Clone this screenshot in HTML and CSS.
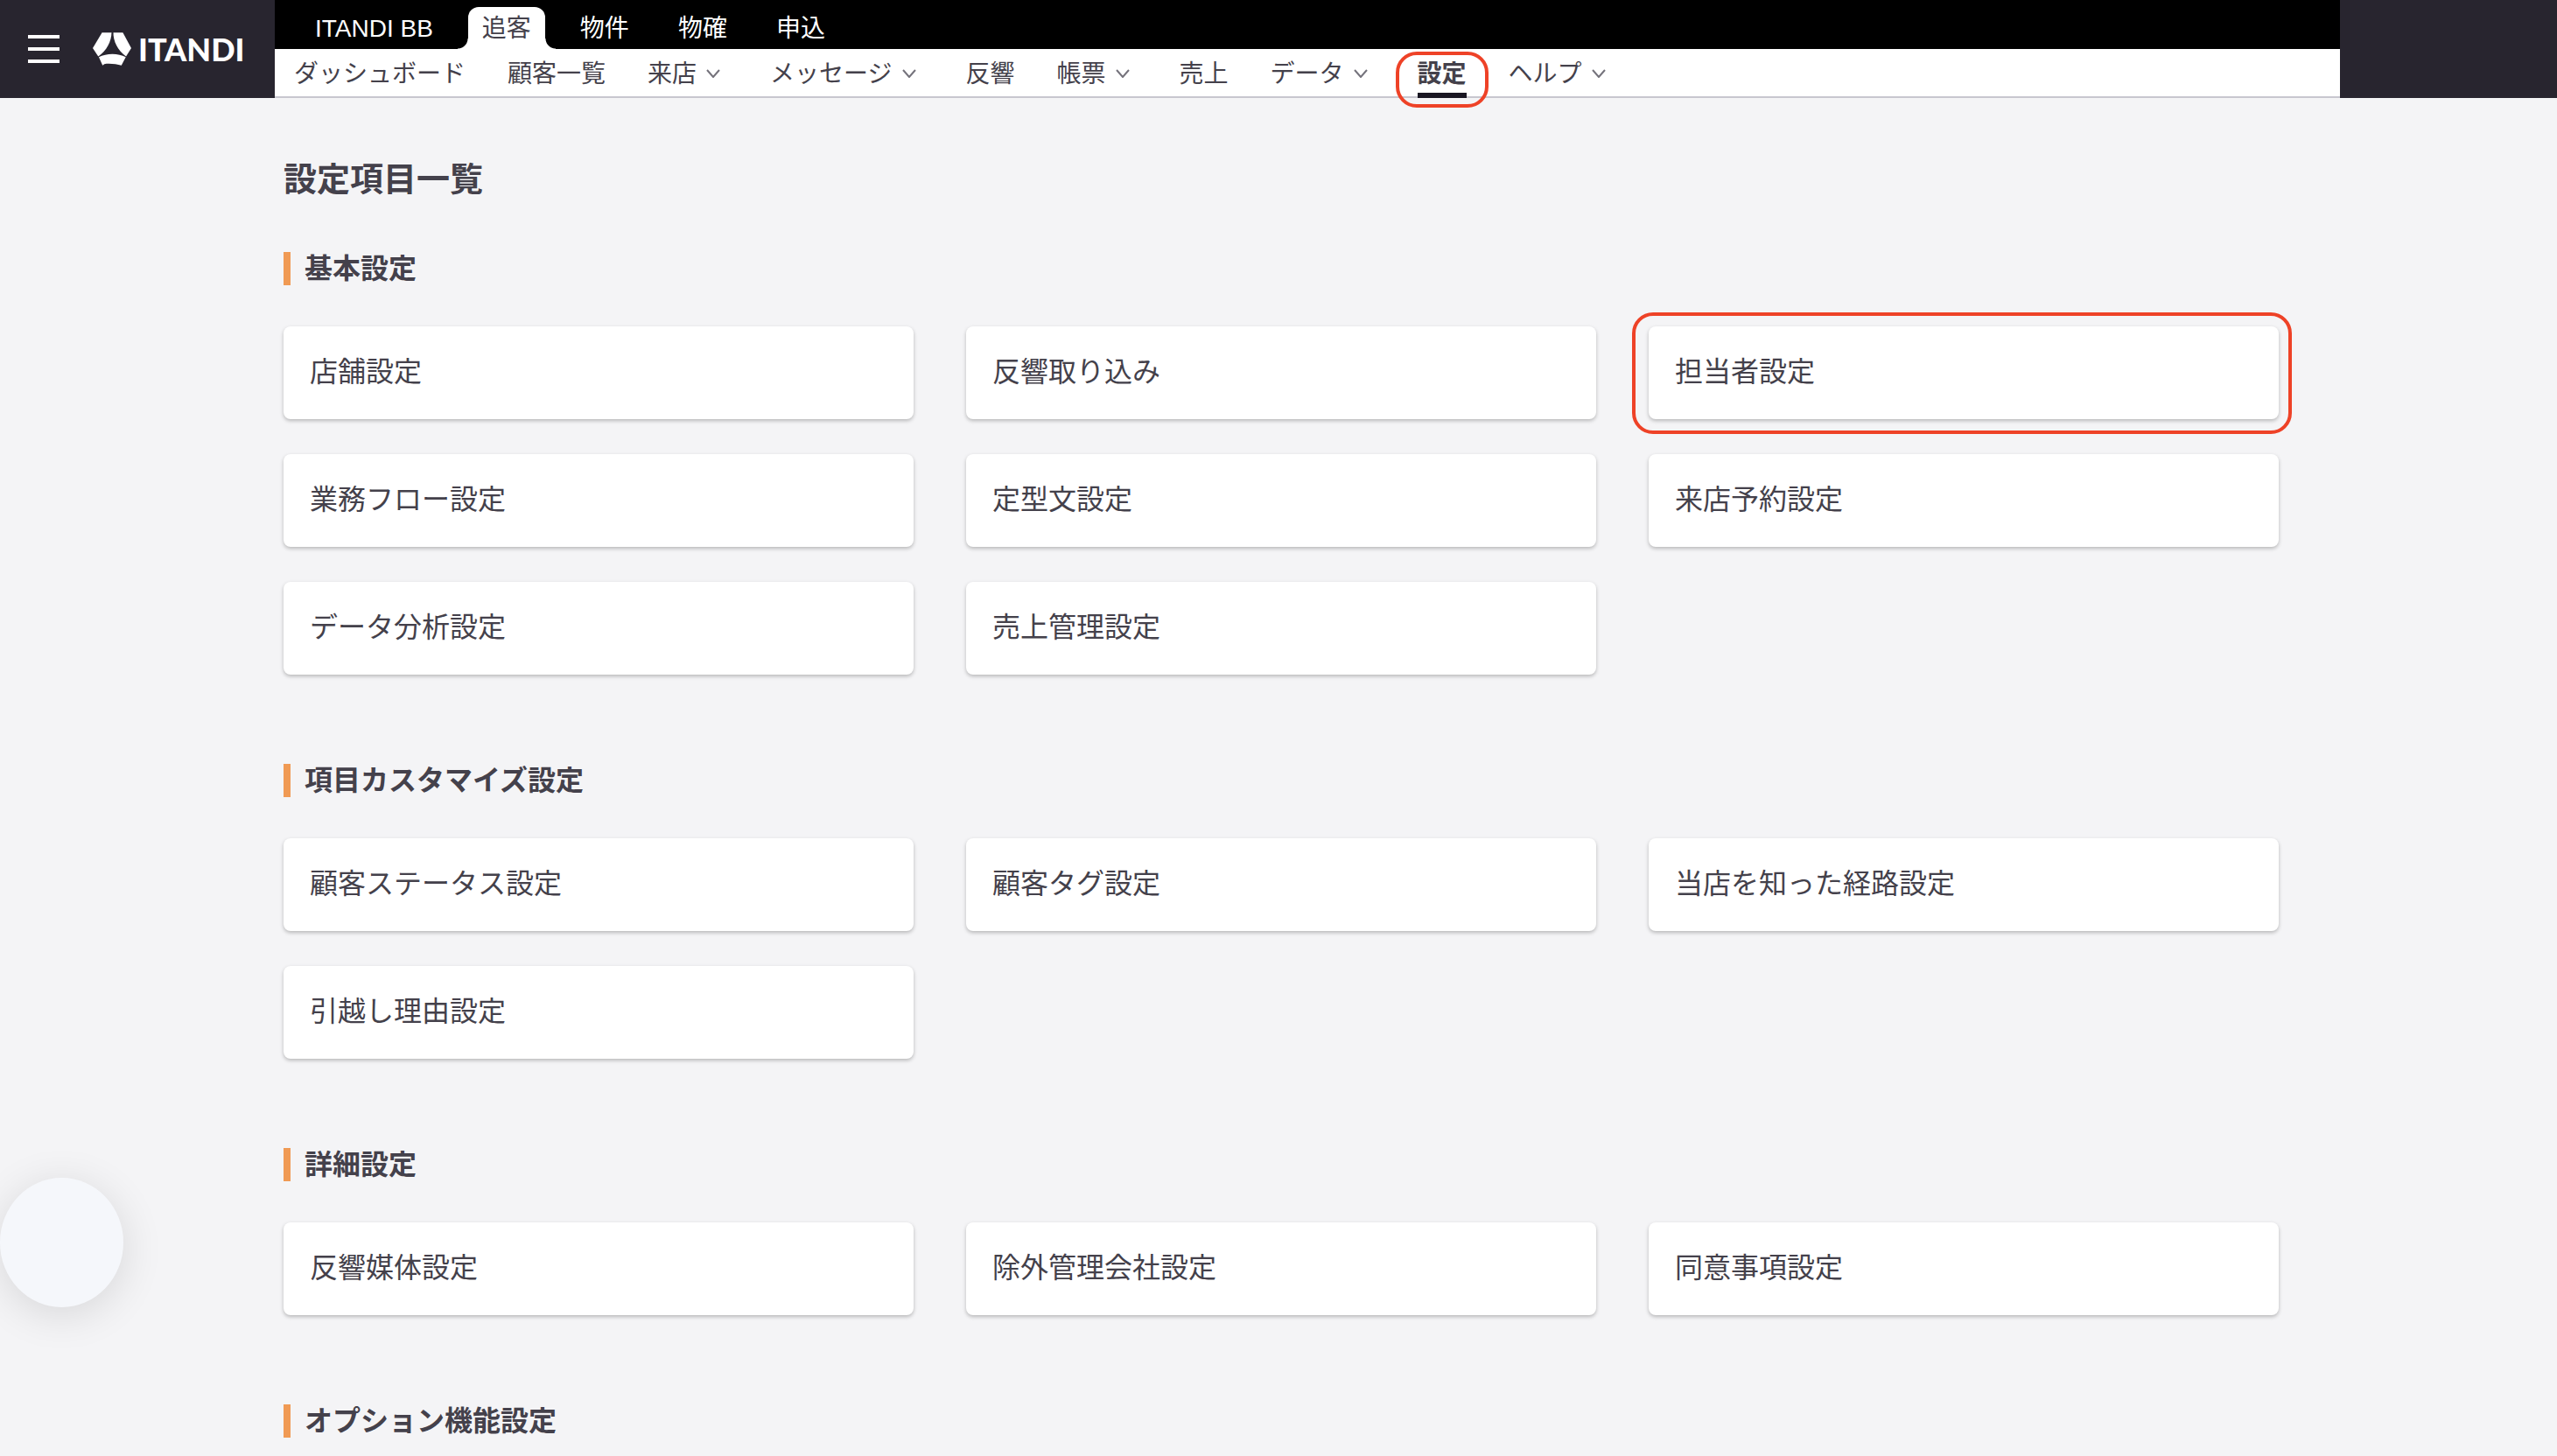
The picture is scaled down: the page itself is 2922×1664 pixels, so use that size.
FILE: index.html
```html
<!DOCTYPE html>
<html lang="ja">
<head>
  <meta charset="UTF-8" />
  <meta name="viewport" content="width=device-width, initial-scale=1.0" />
  <title>設定項目一覧 | ITANDI BB</title>
  <link rel="stylesheet" href="styles.css">
</head>
<body>
  <header class="header">
    <div class="brand">
      <button type="button" class="menu-button" aria-label="メニュー">
        <span></span>
        <span></span>
        <span></span>
      </button>
      <a href="#" class="logo">
        <svg class="logo-mark" viewBox="48 51 133 114" aria-hidden="true">
          <path d="M80 51H113C112 82 97 112 67 134L48 105Z" />
          <path d="M119 51H152L181 105L163 134C134 112 119 82 119 51Z" />
          <path d="M69 136C94 122 136 121 162 136L147 165C130 160 105 157 88 160L82 165Z" />
        </svg>
        <span class="logo-text">ITANDI</span>
      </a>
    </div>

    <div class="header-nav">
      <nav class="service-nav">
        <a href="#">ITANDI BB</a>
        <a href="#" class="active">追客</a>
        <a href="#">物件</a>
        <a href="#">物確</a>
        <a href="#">申込</a>
      </nav>
      <nav class="page-nav">
        <a href="#">ダッシュボード</a>
        <a href="#">顧客一覧</a>
        <a href="#">来店<svg class="chevron" viewBox="0 0 16 10"><path d="M1 1L8 9L15 1" /></svg></a>
        <a href="#">メッセージ<svg class="chevron" viewBox="0 0 16 10"><path d="M1 1L8 9L15 1" /></svg></a>
        <a href="#">反響</a>
        <a href="#">帳票<svg class="chevron" viewBox="0 0 16 10"><path d="M1 1L8 9L15 1" /></svg></a>
        <a href="#">売上</a>
        <a href="#">データ<svg class="chevron" viewBox="0 0 16 10"><path d="M1 1L8 9L15 1" /></svg></a>
        <a href="#" class="current">設定</a>
        <a href="#">ヘルプ<svg class="chevron" viewBox="0 0 16 10"><path d="M1 1L8 9L15 1" /></svg></a>
      </nav>
    </div>
  </header>

  <main class="settings">
    <h1>設定項目一覧</h1>

    <section>
      <h2>基本設定</h2>
      <div class="card-grid">
        <a href="#" class="card">店舗設定</a>
        <a href="#" class="card">反響取り込み</a>
        <a href="#" class="card marked">担当者設定</a>
        <a href="#" class="card">業務フロー設定</a>
        <a href="#" class="card">定型文設定</a>
        <a href="#" class="card">来店予約設定</a>
        <a href="#" class="card">データ分析設定</a>
        <a href="#" class="card">売上管理設定</a>
      </div>
    </section>

    <section>
      <h2>項目カスタマイズ設定</h2>
      <div class="card-grid">
        <a href="#" class="card">顧客ステータス設定</a>
        <a href="#" class="card">顧客タグ設定</a>
        <a href="#" class="card">当店を知った経路設定</a>
        <a href="#" class="card">引越し理由設定</a>
      </div>
    </section>

    <section>
      <h2>詳細設定</h2>
      <div class="card-grid">
        <a href="#" class="card">反響媒体設定</a>
        <a href="#" class="card">除外管理会社設定</a>
        <a href="#" class="card">同意事項設定</a>
      </div>
    </section>

    <section>
      <h2>オプション機能設定</h2>
    </section>
  </main>

  <button type="button" class="float-button" aria-label="サポート"></button>
</body>
</html>
```
FILE: styles.css
```css
* {
  box-sizing: border-box;
}
body {
  margin: 0;
  font-family: 'Liberation Sans', 'Noto Sans CJK JP', sans-serif;
  background-color: #f4f4f6;
  color: #44414b;
}
a {
  color: inherit;
  text-decoration: none;
}
button {
  padding: 0;
  border: none;
  cursor: pointer;
}

/* header */
.header {
  display: flex;
  height: 112px;
  padding-right: 248px;
  background-color: #28252f;
}
.brand {
  display: flex;
  align-items: center;
  flex: none;
  width: 314px;
  padding-left: 32px;
}
.menu-button {
  display: flex;
  flex-direction: column;
  gap: 10px;
  width: 36px;
  margin-right: 38px;
  background: none;
}
.menu-button span {
  width: 100%;
  height: 4px;
  background-color: #fff;
}
.logo {
  display: flex;
  align-items: center;
  gap: 8px;
  color: #fff;
}
.logo-mark {
  width: 44px;
  height: 38px;
  fill: #fff;
}
.logo-text {
  font-family: Lato, sans-serif;
  font-size: 36px;
  font-weight: 900;
  line-height: 38px;
}
.header-nav {
  flex: 1;
  font-size: 28px;
}
.service-nav {
  display: flex;
  align-items: flex-end;
  gap: 24px;
  height: 56px;
  padding-left: 30px;
  background-color: #000;
  color: #fff;
}
.service-nav a {
  position: relative;
  height: 48px;
  padding: 0 16px;
  line-height: 50px;
}
.service-nav .active {
  background-color: #fff;
  color: #44414b;
  border-radius: 12px 12px 0 0;
}
/* flared corners at the foot of the tab */
.service-nav .active::before,
.service-nav .active::after {
  content: '';
  position: absolute;
  bottom: 0;
  width: 12px;
  height: 12px;
}
.service-nav .active::before {
  right: 100%;
  background: radial-gradient(circle at 0 0, #000 11px, #fff 12px);
}
.service-nav .active::after {
  left: 100%;
  background: radial-gradient(circle at 100% 0, #000 11px, #fff 12px);
}
.page-nav {
  display: flex;
  gap: 48px;
  height: 56px;
  padding-left: 22px;
  background-color: #fff;
  border-bottom: 2px solid #c8c7cf;
  white-space: nowrap;
}
.page-nav a {
  position: relative;
  height: 56px;
  line-height: 58px;
}
.page-nav .current {
  font-weight: 700;
  border-bottom: 6px solid #191622;
}
.chevron {
  width: 16px;
  height: 10px;
  margin: 0 9px 0 11px;
  vertical-align: 5px;
  fill: none;
  stroke: #74727b;
  stroke-width: 2;
}

/* red frames */
.page-nav .current::after,
.marked::after {
  content: '';
  position: absolute;
  border: 4px solid #ee4227;
  border-radius: 24px;
  pointer-events: none;
}
.page-nav .current::after {
  inset: 3px -25px -17px -25px;
}
.marked::after {
  inset: -16px -15px -17px -19px;
}

/* settings list */
.settings {
  padding: 65px 318px 0 324px;
}
h1 {
  margin: 0 0 55px;
  font-size: 38px;
  line-height: 56px;
}
h2 {
  margin: 0 0 47px;
  padding-left: 16px;
  border-left: 8px solid #f09a54;
  font-size: 32px;
  line-height: 38px;
}
section {
  margin-bottom: 102px;
}
section:last-child {
  margin-bottom: 0;
}
.card-grid {
  display: grid;
  grid-template-columns: repeat(3, 1fr);
  gap: 40px 60px;
}
.card {
  position: relative;
  height: 106px;
  padding: 0 30px;
  background-color: #fff;
  border-radius: 8px;
  box-shadow: 0 2px 4px rgba(0, 0, 0, 0.25);
  font-size: 32px;
  line-height: 104px;
}

.float-button {
  position: fixed;
  left: 0;
  bottom: 170px;
  width: 141px;
  height: 148px;
  border-radius: 50%;
  background-color: #f5f7fb;
  box-shadow: 0 8px 48px rgba(0, 0, 0, 0.12);
}
```
